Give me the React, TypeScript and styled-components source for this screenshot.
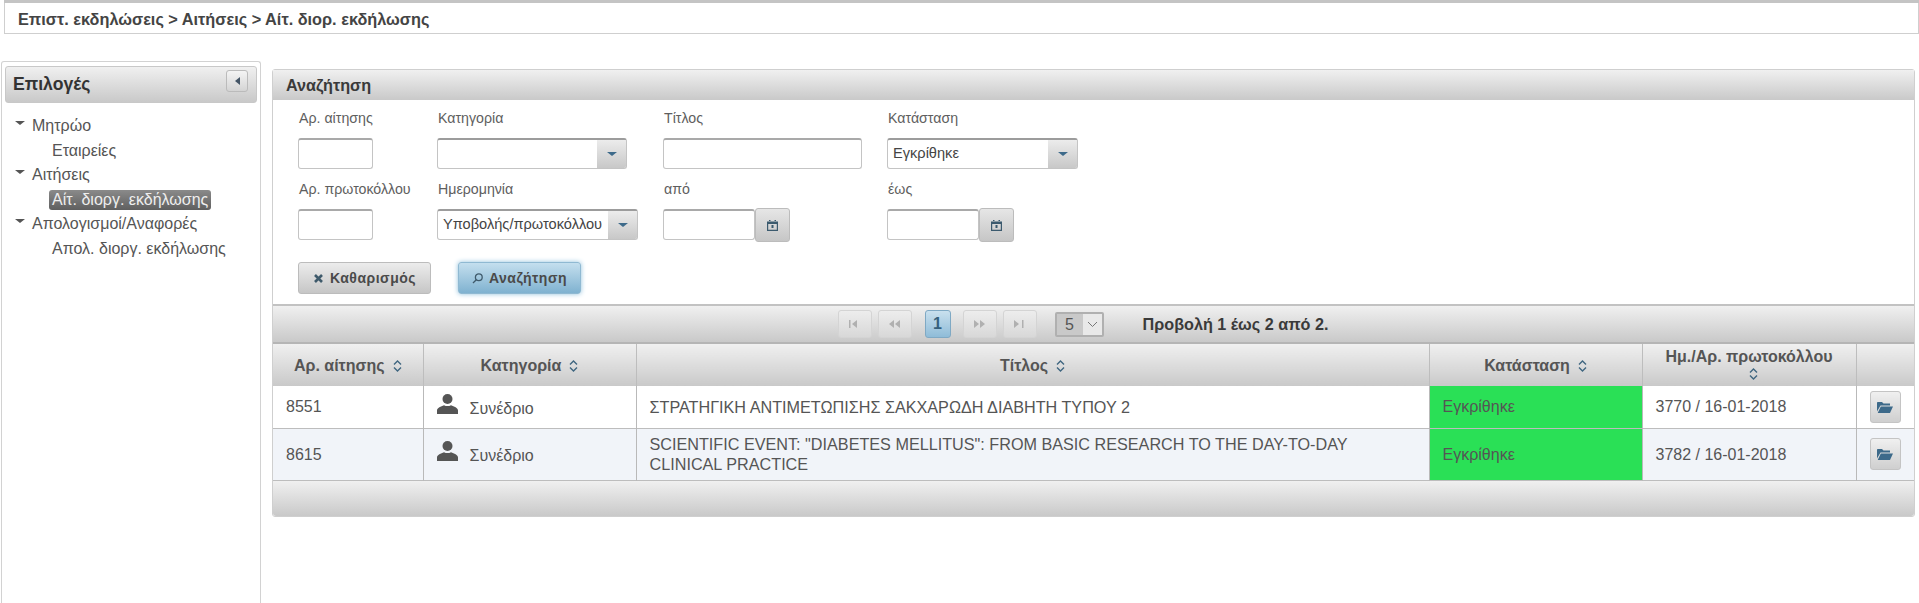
import React from "react";
import styled, { createGlobalStyle } from "styled-components";

const GlobalStyle = createGlobalStyle`
  html, body {
    margin: 0;
    background: #fff;
    font-family: "Liberation Sans", Arial, sans-serif;
    color: #4f4f4f;
    font-size: 14px;
  }
  * { box-sizing: border-box; }
`;

const headGradient = "linear-gradient(to bottom, #f0f0f0, #c9c9c9)";

const TopStrip = styled.div`
  height: 3px;
  margin-left: 4px;
  background: #c4c4c4;
`;
const Breadcrumb = styled.div`
  height: 31px;
  margin-left: 4px;
  padding: 0 0 0 13px;
  border: 1px solid #cfcfcf;
  border-top: none;
  line-height: 32px;
  font-size: 16.3px;
  font-weight: bold;
  color: #444;
`;
const Layout = styled.div`
  display: flex;
  align-items: flex-start;
  gap: 11px;
  padding: 27px 4px 0 1px;
`;
const Sidebar = styled.aside`
  width: 260px;
  height: 542px;
  flex: none;
  padding: 4px 3px;
  border: 1px solid #d2d2d2;
  border-bottom: none;
  border-radius: 3px 3px 0 0;
`;
const SideHead = styled.div`
  height: 37px;
  display: flex;
  align-items: center;
  justify-content: space-between;
  padding: 0 8px 0 7px;
  background: ${headGradient};
  border: 1px solid #c8c8c8;
  border-radius: 3px;
  font-size: 17.6px;
  font-weight: bold;
  color: #333;
`;
const CollapseBtn = styled.div`
  width: 22px;
  height: 22px;
  margin-top: -7px;
  display: flex;
  align-items: center;
  justify-content: center;
  background: linear-gradient(to bottom, #f4f4f4, #d4d4d4);
  border: 1px solid #bbb;
  border-radius: 3px;
`;
const LeftArrow = styled.span`
  border-style: solid;
  border-width: 4px 5px 4px 0;
  border-color: transparent #456 transparent transparent;
`;
const Tree = styled.ul`
  list-style: none;
  margin: 0;
  padding: 11px 0 0 0;
  font-size: 16px;
  line-height: 24.6px;
`;
const TreeParent = styled.li`
  position: relative;
  padding-left: 27px;
  color: #555;
  &::before {
    content: "";
    position: absolute;
    left: 10px;
    top: 7px;
    border-style: solid;
    border-width: 4px 5px 0 5px;
    border-color: #555 transparent transparent transparent;
  }
`;
const TreeLeaf = styled.li<{ $active?: boolean }>`
  padding-left: 47px;
  color: #555;
  ${({ $active }) =>
    $active
      ? `
    & > span {
      display: inline-block;
      margin-left: -3px;
      padding: 0 3px;
      line-height: 20px;
      color: #eee;
      border-radius: 3px;
      background: linear-gradient(to bottom, #8a8a8a, #5f5f5f);
    }
  `
      : ""}
`;
const Main = styled.main`
  flex: 1;
  margin-top: 8px;
  min-width: 0;
  border: 1px solid #cfcfcf;
  border-radius: 3px;
`;
const PanelHead = styled.div`
  height: 30px;
  padding: 0 13px;
  line-height: 30px;
  font-size: 16.2px;
  font-weight: bold;
  color: #3a3a3a;
  background: ${headGradient};
`;
const SearchForm = styled.div`
  display: grid;
  grid-template-columns: 139px 226px 224px 1fr;
  grid-auto-rows: min-content;
  padding: 6px 0 0 25px;
  height: 204px;
`;
const Field = styled.div`
  height: 71px;
  display: flex;
  flex-direction: column;
`;
const FieldLabel = styled.label`
  height: 32px;
  padding: 2px 0 0 1px;
  font-size: 14.2px;
  line-height: 20px;
  color: #5e5e5e;
`;
const TextInput = styled.div<{ $w: number }>`
  width: ${({ $w }) => $w}px;
  height: 31px;
  border: 1px solid #c4c4c4;
  border-top: 2px solid #a9a9a9;
  border-radius: 3px;
  background: #fff;
`;
const Row = styled.div`
  display: flex;
`;
const SelectBox = styled.div<{ $w: number }>`
  width: ${({ $w }) => $w}px;
  height: 31px;
  display: flex;
  border: 1px solid #c4c4c4;
  border-top: 2px solid #9c9c9c;
  border-radius: 3px;
  overflow: hidden;
`;
const SelectValue = styled.div`
  flex: 1;
  padding-left: 5px;
  font-size: 14.6px;
  line-height: 26px;
  color: #444;
  white-space: nowrap;
`;
const SelectArrow = styled.div`
  width: 29px;
  flex: none;
  display: flex;
  align-items: center;
  justify-content: center;
  background: linear-gradient(to bottom, #ececec, #c8c8c8);
  &::after {
    content: "";
    border-style: solid;
    border-width: 4px 5px 0 5px;
    border-color: #3d6a8a transparent transparent transparent;
  }
`;
const CalendarBtn = styled.div`
  width: 35px;
  height: 34px;
  margin-top: -1px;
  display: flex;
  align-items: center;
  justify-content: center;
  background: linear-gradient(to bottom, #e6e6e6, #c6c6c6);
  border: 1px solid #bcbcbc;
  border-radius: 3px;
  svg {
    width: 11px;
    height: 11px;
    fill: #3b5a6e;
  }
`;
const Actions = styled.div`
  grid-column: 1 / -1;
  display: flex;
  gap: 27px;
  padding-top: 14px;
`;
const ActionBtn = styled.button<{ $primary?: boolean; $w: number }>`
  width: ${({ $w }) => $w}px;
  height: 32px;
  display: flex;
  align-items: center;
  justify-content: center;
  gap: 6px;
  padding: 0;
  font-family: inherit;
  font-size: 14px;
  font-weight: bold;
  letter-spacing: 0.5px;
  color: #4a4a4a;
  border-radius: 3px;
  border: 1px solid ${({ $primary }) => ($primary ? "#8fb9d2" : "#bcbcbc")};
  background: ${({ $primary }) =>
    $primary ? "linear-gradient(to bottom, #c4dfee, #7fb2d0)" : "linear-gradient(to bottom, #ececec, #c6c6c6)"};
  box-shadow: ${({ $primary }) => ($primary ? "0 0 5px #8fc0dc" : "none")};
  svg {
    width: 11px;
    height: 11px;
    fill: none;
    stroke: #3f5a6b;
  }
`;
const Paginator = styled.div`
  height: 40px;
  display: flex;
  align-items: center;
  justify-content: center;
  padding-right: 21px;
  border-top: 2px solid #c2c2c2;
  border-bottom: 2px solid #b5b5b5;
  background: ${headGradient};
`;
const PageBtn = styled.div<{ $active?: boolean }>`
  width: ${({ $active }) => ($active ? 26 : 34)}px;
  height: 28px;
  display: flex;
  align-items: center;
  justify-content: center;
  font-size: 16px;
  font-weight: bold;
  border-radius: 3px;
  color: ${({ $active }) => ($active ? "#35607c" : "#a9a9a9")};
  border: 1px solid ${({ $active }) => ($active ? "#7fa9c4" : "#d4d4d4")};
  background: ${({ $active }) =>
    $active ? "linear-gradient(to bottom, #c9e0ee, #8fbcd8)" : "linear-gradient(to bottom, #ededed, #d8d8d8)"};
`;
const PagerGap = styled.span<{ $w: number }>`
  width: ${({ $w }) => $w}px;
  flex: none;
`;
const PageGlyph = styled.svg`
  width: 12px;
  height: 8px;
  fill: #b0b0b0;
`;
const PageSize = styled.div`
  width: 49px;
  height: 25px;
  display: flex;
  border: 2px solid #b0b0b0;
  border-radius: 2px;
  font-size: 16px;
  line-height: 21px;
  color: #555;
  background: #c9c9c9;
`;
const PageSizeValue = styled.span`
  width: 26px;
  text-align: center;
`;
const PageSizeArrow = styled.span`
  flex: 1;
  display: flex;
  align-items: center;
  justify-content: center;
  background: #e9e9e9;
  svg {
    width: 11px;
    height: 7px;
    fill: none;
    stroke: #777;
  }
`;
const PagerText = styled.span`
  font-size: 16.2px;
  font-weight: bold;
  color: #3a3a3a;
`;
const DataTable = styled.table`
  width: 100%;
  border-collapse: collapse;
  table-layout: fixed;
  font-size: 16px;
`;
const Th = styled.th<{ $w?: number }>`
  width: ${({ $w }) => ($w ? `${$w}px` : "auto")};
  height: 42px;
  padding: 0 18px;
  font-size: 16px;
  font-weight: bold;
  line-height: 17px;
  color: #555;
  background: ${headGradient};
  border-left: 1px solid #bdbdbd;
  &:first-child {
    border-left: none;
  }
`;
const Td = styled.td<{ $ok?: boolean }>`
  padding: 0 13px;
  line-height: 17px;
  color: #555;
  border-left: 1px solid #b9b9b9;
  background: ${({ $ok }) => ($ok ? "#2ae056" : "transparent")};
  &:first-child {
    border-left: none;
  }
`;
const TitleCell = styled(Td)`
  font-size: 16.2px;
  line-height: 20px;
`;
const Tr = styled.tr<{ $alt?: boolean; $h: number }>`
  height: ${({ $h }) => $h}px;
  background: ${({ $alt }) => ($alt ? "#f1f4f9" : "#fff")};
  border-bottom: 1px solid #bdbdbd;
`;
const Category = styled.div`
  display: flex;
  align-items: flex-start;
  gap: 12px;
  svg {
    width: 21px;
    height: 20px;
    flex: none;
    fill: #555;
    margin-top: -3px;
  }
  span {
    padding-top: 3px;
  }
`;
const SortIcon = styled.svg`
  width: 9px;
  height: 12px;
  margin-left: 8px;
  vertical-align: -1px;
  fill: none;
  stroke: #3f6680;
  stroke-width: 1.4;
`;
const OpenBtn = styled.div`
  width: 31px;
  height: 32px;
  margin: 0 auto;
  display: flex;
  align-items: center;
  justify-content: center;
  background: linear-gradient(to bottom, #f0f0f0, #cfcfcf);
  border: 1px solid #c4c4c4;
  border-radius: 3px;
  svg {
    width: 16px;
    height: 12px;
    fill: #3d6a8a;
  }
`;
const PanelFoot = styled.div`
  height: 35px;
  border-radius: 0 0 3px 3px;
  background: ${headGradient};
`;

const Sort = () => (
  <SortIcon viewBox="0 0 9 12">
    <path d="M1 4.500 4.500 1 8 4.500M1 7.500 4.500 11 8 7.500" />
  </SortIcon>
);

const CalendarIcon = () => (
  <svg viewBox="0 0 11 11">
    <path d="M2 0h1.500v2H2zM7.500 0H9v2H7.500zM0 1.500h11V11H0zM1.200 4v5.800h8.600V4zM4.500 5h2v3h-2z" fillRule="evenodd" />
  </svg>
);

const UserIcon = () => (
  <svg viewBox="0 0 21 20">
    <circle cx="10.500" cy="5" r="5" />
    <path d="M0 20v-3.500c0-3 4-4 7-5.300 2 1.200 5 1.200 7 0 3 1.300 7 2.300 7 5.300V20z" />
  </svg>
);

const FolderIcon = () => (
  <svg viewBox="0 0 16 12">
    <path d="M0 2c0-.6.400-1 1-1h4l1.500 1.500H13v2H3.500L0 10.500zM3.800 5.500H16l-3 6.500H.7z" />
  </svg>
);

const pagerGlyphs = [
  "M0 0h1.500v8H0zM3 4l5-4v8z",
  "M0 4l5-4v8zM6 4l5-4v8z",
  "M0 0l5 4-5 4zM6 0l5 4-5 4z",
  "M0 0l5 4-5 4zM8 0h1.500v8H8z",
];

const PagerIcon = ({ d }: { d: string }) => (
  <PageBtn>
    <PageGlyph viewBox="0 0 12 8">
      <path d={d} />
    </PageGlyph>
  </PageBtn>
);

const rows = [
  { id: "8551", title: "ΣΤΡΑΤΗΓΙΚΗ ΑΝΤΙΜΕΤΩΠΙΣΗΣ ΣΑΚΧΑΡΩΔΗ ΔΙΑΒΗΤΗ ΤΥΠΟΥ 2", prot: "3770 / 16-01-2018", h: 42 },
  {
    id: "8615",
    title: 'SCIENTIFIC EVENT: "DIABETES MELLITUS": FROM BASIC RESEARCH TO THE DAY-TO-DAY CLINICAL PRACTICE',
    prot: "3782 / 16-01-2018",
    h: 52,
  },
];

export default function App() {
  return (
    <>
      <GlobalStyle />
      <TopStrip />
      <Breadcrumb>Επιστ. εκδηλώσεις &gt; Αιτήσεις &gt; Αίτ. διορ. εκδήλωσης</Breadcrumb>
      <Layout>
        <Sidebar>
          <SideHead>
            Επιλογές
            <CollapseBtn>
              <LeftArrow />
            </CollapseBtn>
          </SideHead>
          <Tree>
            <TreeParent>Μητρώο</TreeParent>
            <TreeLeaf>Εταιρείες</TreeLeaf>
            <TreeParent>Αιτήσεις</TreeParent>
            <TreeLeaf $active>
              <span>Αίτ. διοργ. εκδήλωσης</span>
            </TreeLeaf>
            <TreeParent>Απολογισμοί/Αναφορές</TreeParent>
            <TreeLeaf>Απολ. διοργ. εκδήλωσης</TreeLeaf>
          </Tree>
        </Sidebar>
        <Main>
          <PanelHead>Αναζήτηση</PanelHead>
          <SearchForm>
            <Field>
              <FieldLabel>Αρ. αίτησης</FieldLabel>
              <TextInput $w={75} />
            </Field>
            <Field>
              <FieldLabel>Κατηγορία</FieldLabel>
              <SelectBox $w={190}>
                <SelectValue />
                <SelectArrow />
              </SelectBox>
            </Field>
            <Field>
              <FieldLabel>Τίτλος</FieldLabel>
              <TextInput $w={199} />
            </Field>
            <Field>
              <FieldLabel>Κατάσταση</FieldLabel>
              <SelectBox $w={191}>
                <SelectValue>Εγκρίθηκε</SelectValue>
                <SelectArrow />
              </SelectBox>
            </Field>
            <Field>
              <FieldLabel>Αρ. πρωτοκόλλου</FieldLabel>
              <TextInput $w={75} />
            </Field>
            <Field>
              <FieldLabel>Ημερομηνία</FieldLabel>
              <SelectBox $w={201}>
                <SelectValue>Υποβολής/πρωτοκόλλου</SelectValue>
                <SelectArrow />
              </SelectBox>
            </Field>
            <Field>
              <FieldLabel>από</FieldLabel>
              <Row>
                <TextInput $w={92} />
                <CalendarBtn>
                  <CalendarIcon />
                </CalendarBtn>
              </Row>
            </Field>
            <Field>
              <FieldLabel>έως</FieldLabel>
              <Row>
                <TextInput $w={92} />
                <CalendarBtn>
                  <CalendarIcon />
                </CalendarBtn>
              </Row>
            </Field>
            <Actions>
              <ActionBtn $w={133}>
                <svg viewBox="0 0 11 11" strokeWidth="2.6">
                  <path d="M2 2l7 7M9 2l-7 7" />
                </svg>
                Καθαρισμός
              </ActionBtn>
              <ActionBtn $primary $w={123}>
                <svg viewBox="0 0 11 11" strokeWidth="1.300">
                  <circle cx="6.800" cy="4.200" r="3.400" />
                  <path d="M4.300 6.700 1 10" />
                </svg>
                Αναζήτηση
              </ActionBtn>
            </Actions>
          </SearchForm>
          <Paginator>
            <PagerIcon d={pagerGlyphs[0]} />
            <PagerGap $w={6} />
            <PagerIcon d={pagerGlyphs[1]} />
            <PagerGap $w={13} />
            <PageBtn $active>1</PageBtn>
            <PagerGap $w={12} />
            <PagerIcon d={pagerGlyphs[2]} />
            <PagerGap $w={6} />
            <PagerIcon d={pagerGlyphs[3]} />
            <PagerGap $w={18} />
            <PageSize>
              <PageSizeValue>5</PageSizeValue>
              <PageSizeArrow>
                <svg viewBox="0 0 11 7">
                  <path d="M1 1l4.500 4.500L10 1" />
                </svg>
              </PageSizeArrow>
            </PageSize>
            <PagerGap $w={39} />
            <PagerText>Προβολή 1 έως 2 από 2.</PagerText>
          </Paginator>
          <DataTable>
            <thead>
              <tr>
                <Th $w={150}>
                  Αρ. αίτησης
                  <Sort />
                </Th>
                <Th $w={213}>
                  Κατηγορία
                  <Sort />
                </Th>
                <Th>
                  Τίτλος
                  <Sort />
                </Th>
                <Th $w={213}>
                  Κατάσταση
                  <Sort />
                </Th>
                <Th $w={214}>
                  Ημ./Αρ. πρωτοκόλλου
                  <Sort />
                </Th>
                <Th $w={58} />
              </tr>
            </thead>
            <tbody>
              {rows.map((r, i) => (
                <Tr key={r.id} $alt={i === 1} $h={r.h}>
                  <Td>{r.id}</Td>
                  <Td>
                    <Category>
                      <UserIcon />
                      <span>Συνέδριο</span>
                    </Category>
                  </Td>
                  <TitleCell>{r.title}</TitleCell>
                  <Td $ok>Εγκρίθηκε</Td>
                  <Td>{r.prot}</Td>
                  <Td>
                    <OpenBtn>
                      <FolderIcon />
                    </OpenBtn>
                  </Td>
                </Tr>
              ))}
            </tbody>
          </DataTable>
          <PanelFoot />
        </Main>
      </Layout>
    </>
  );
}
